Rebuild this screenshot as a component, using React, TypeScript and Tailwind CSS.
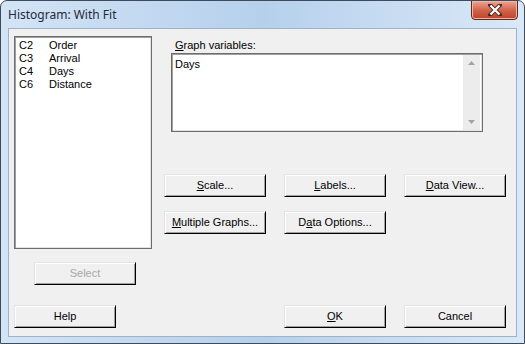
// Histogram: With Fit — Minitab dialog, Windows 7 Aero frame

const FONT = { fontFamily: '"Liberation Sans", Arial, sans-serif' };

// ─── Bouton classique Windows ────────────────────────────────────────────────

function WinButton({
  children,
  disabled = false,
  className = '',
}: {
  children: React.ReactNode;
  disabled?: boolean;
  className?: string;
}) {
  return (
    <div
      className={`w-[102px] h-[23px] flex items-center justify-center text-[11px] leading-[13px] bg-[#f0f0f0] border border-t-[#e3e3e3] border-l-[#e3e3e3] border-b-[#000] border-r-[#000] shadow-[inset_1px_1px_0_#ffffff,inset_-1px_-1px_0_#a0a0a0] ${
        disabled ? 'text-[#a8a8a8]' : 'text-black'
      } ${className}`}
    >
      {children}
    </div>
  );
}

const COLUMNS = [
  { id: 'C2', name: 'Order' },
  { id: 'C3', name: 'Arrival' },
  { id: 'C4', name: 'Days' },
  { id: 'C6', name: 'Distance' },
];

export default function App() {
  return (
    <div
      className="w-[525px] h-[344px] flex flex-col border border-[#3d4b5c] rounded-t-[7px] bg-gradient-to-r from-[#d3e4f5] via-[#b6d0ec] to-[#d9e9f7] overflow-hidden"
      style={FONT}
    >
      {/* Barre de titre */}
      <div className="h-[27px] flex items-start justify-between shrink-0">
        <span
          className="ml-[7px] mt-[6px] text-[12px] leading-[15px] text-[#1e2a3a]"
          style={{ fontFamily: '"Noto Sans", "Open Sans", sans-serif' }}
        >
          Histogram: With Fit
        </span>
        <div className="mr-[6px] -mt-[1px] w-[47px] h-[20px] rounded-b-[4px] border border-[#5e2a20] bg-gradient-to-b from-[#e9a896] via-[#d2634b] to-[#c0402a] shadow-[inset_0_0_0_1px_#f0b6a6] flex items-center justify-center">
          <svg width="14" height="12" viewBox="0 0 14 12">
            <path
              d="M2 1 L12 11 M12 1 L2 11"
              stroke="#4a2a25"
              strokeWidth="4"
              strokeLinecap="square"
              fill="none"
            />
            <path
              d="M2.5 1.5 L11.5 10.5 M11.5 1.5 L2.5 10.5"
              stroke="#ffffff"
              strokeWidth="2.2"
              fill="none"
            />
          </svg>
        </div>
      </div>

      {/* Zone client */}
      <div className="mx-[7px] mb-[6px] flex-1 bg-[#f0f0f0] border border-[#9fb2c8] flex flex-col">
        <div className="flex pl-[5px] pt-[7px]">
          {/* Colonne gauche : liste des variables */}
          <div className="w-[138px] flex flex-col">
            <div className="h-[213px] bg-white border border-[#6d6d6d] shadow-[inset_1px_1px_0_#a0a0a0,inset_-1px_-1px_0_#e3e3e3] pl-[4px] pt-[2px] text-[11px] leading-[13px] text-black">
              {COLUMNS.map((c) => (
                <div key={c.id} className="flex">
                  <span className="w-[30px]">{c.id}</span>
                  <span>{c.name}</span>
                </div>
              ))}
            </div>
            <WinButton disabled className="ml-[20px] mt-[13px]">
              Select
            </WinButton>
          </div>

          {/* Colonne droite */}
          <div className="ml-[12px] flex flex-col">
            <div className="ml-[11px] mt-[3px] h-[13px] text-[11px] leading-[13px] text-black">
              <u>G</u>raph variables:
            </div>
            <div className="ml-[7px] mt-[1px] w-[312px] h-[79px] flex bg-white border border-[#6d6d6d] shadow-[inset_1px_1px_0_#a0a0a0,inset_-1px_-1px_0_#e3e3e3]">
              <div className="flex-1 pl-[3px] pt-[4px] text-[11px] leading-[13px] text-black">
                Days
              </div>
              <div className="w-[17px] my-[1px] mr-[2px] bg-[#ececec] flex flex-col items-center justify-between py-[6px]">
                <svg width="7" height="4" viewBox="0 0 7 4">
                  <path d="M3.5 0 L7 4 L0 4 Z" fill="#a3a3a3" />
                </svg>
                <svg width="7" height="4" viewBox="0 0 7 4">
                  <path d="M0 0 L7 0 L3.5 4 Z" fill="#a3a3a3" />
                </svg>
              </div>
            </div>

            <div className="mt-[42px] flex gap-[18px]">
              <WinButton>
                <span><u>S</u>cale...</span>
              </WinButton>
              <WinButton>
                <span><u>L</u>abels...</span>
              </WinButton>
              <WinButton>
                <span><u>D</u>ata View...</span>
              </WinButton>
            </div>
            <div className="mt-[14px] flex gap-[18px]">
              <WinButton>
                <span><u>M</u>ultiple Graphs...</span>
              </WinButton>
              <WinButton>
                <span>D<u>a</u>ta Options...</span>
              </WinButton>
            </div>
          </div>
        </div>

        {/* Boutons du bas */}
        <div className="mt-[20px] pl-[5px] flex">
          <WinButton>Help</WinButton>
          <WinButton className="ml-[168px]">
            <span><u>O</u>K</span>
          </WinButton>
          <WinButton className="ml-[18px]">Cancel</WinButton>
        </div>
      </div>
    </div>
  );
}
